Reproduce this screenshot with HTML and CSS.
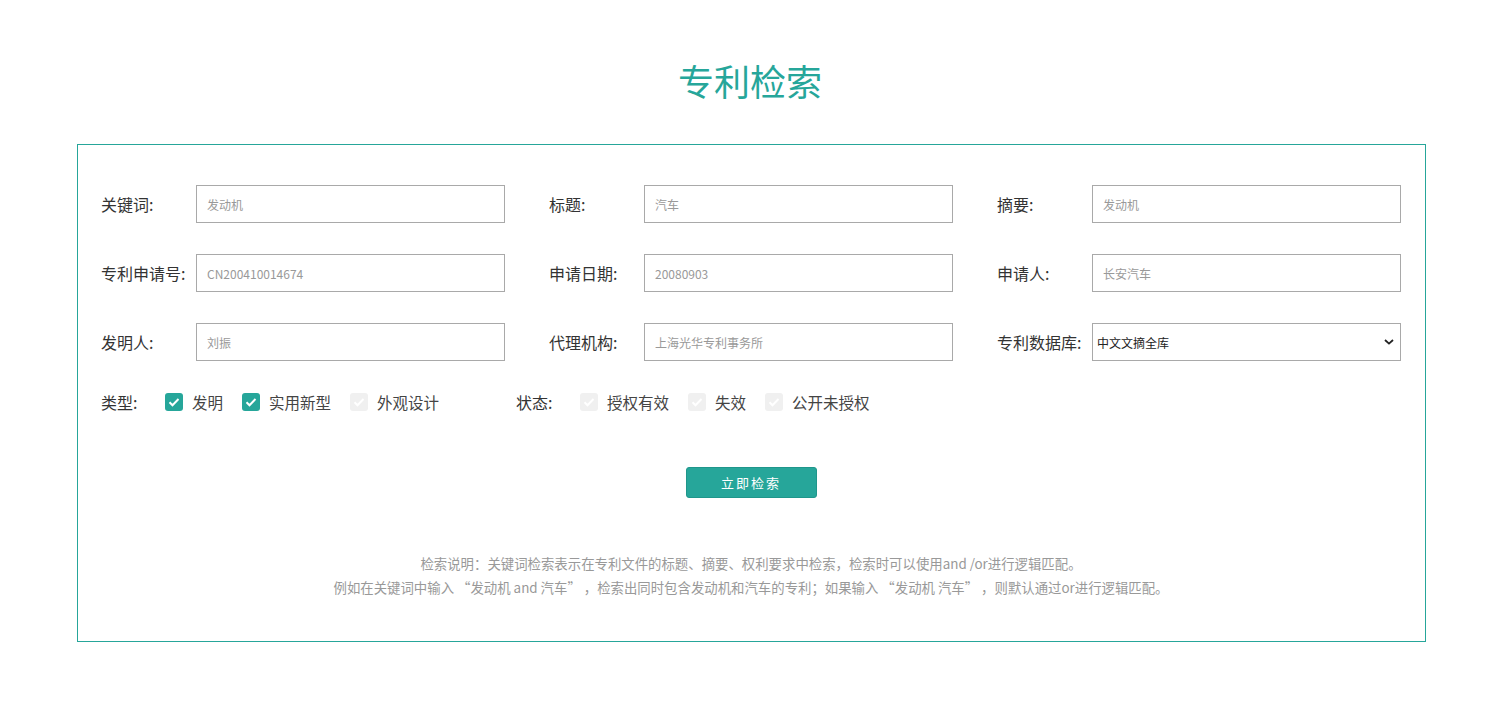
FILE: index.html
```html
<!DOCTYPE html>
<html lang="zh-CN">
<head>
    <meta charset="UTF-8">
    <meta name="viewport" content="width=device-width, initial-scale=1.0">
    <title>专利检索</title>
    <link rel="stylesheet" href="styles.css">
</head>
<body>

<h1 class="page-title">专利检索</h1>

<div class="search-box">
    <div class="form-grid">
        <div class="field">
            <label>关键词:</label>
            <input type="text" placeholder="发动机">
        </div>
        <div class="field">
            <label>标题:</label>
            <input type="text" placeholder="汽车">
        </div>
        <div class="field">
            <label>摘要:</label>
            <input type="text" placeholder="发动机">
        </div>
        <div class="field">
            <label>专利申请号:</label>
            <input type="text" placeholder="CN200410014674">
        </div>
        <div class="field">
            <label>申请日期:</label>
            <input type="text" placeholder="20080903">
        </div>
        <div class="field">
            <label>申请人:</label>
            <input type="text" placeholder="长安汽车">
        </div>
        <div class="field">
            <label>发明人:</label>
            <input type="text" placeholder="刘振">
        </div>
        <div class="field">
            <label>代理机构:</label>
            <input type="text" placeholder="上海光华专利事务所">
        </div>
        <div class="field">
            <label>专利数据库:</label>
            <select>
                <option>中文文摘全库</option>
            </select>
        </div>
    </div>

    <div class="check-row">
        <div class="check-group type-group">
            <span class="group-label">类型:</span>
            <span class="check on"><svg viewBox="0 0 18 18"><path d="M4.5 9.2l3 3 6-6.2" /></svg></span>
            <span class="check-text">发明</span>
            <span class="check on"><svg viewBox="0 0 18 18"><path d="M4.5 9.2l3 3 6-6.2" /></svg></span>
            <span class="check-text">实用新型</span>
            <span class="check"><svg viewBox="0 0 18 18"><path d="M4.5 9.2l3 3 6-6.2" /></svg></span>
            <span class="check-text">外观设计</span>
        </div>
        <div class="check-group">
            <span class="group-label">状态:</span>
            <span class="check"><svg viewBox="0 0 18 18"><path d="M4.5 9.2l3 3 6-6.2" /></svg></span>
            <span class="check-text">授权有效</span>
            <span class="check"><svg viewBox="0 0 18 18"><path d="M4.5 9.2l3 3 6-6.2" /></svg></span>
            <span class="check-text">失效</span>
            <span class="check"><svg viewBox="0 0 18 18"><path d="M4.5 9.2l3 3 6-6.2" /></svg></span>
            <span class="check-text">公开未授权</span>
        </div>
    </div>

    <div class="actions">
        <button class="search-btn">立即检索</button>
    </div>

    <div class="notes">
        <p>检索说明：关键词检索表示在专利文件的标题、摘要、权利要求中检索，检索时可以使用and /or进行逻辑匹配。</p>
        <p>例如在关键词中输入 “发动机 and 汽车” ，检索出同时包含发动机和汽车的专利；如果输入 “发动机 汽车” ，则默认通过or进行逻辑匹配。</p>
    </div>
</div>

</body>
</html>
```

FILE: styles.css
```css
body {
    margin: 0;
    font-family: "Noto Sans CJK SC", "Noto Sans", sans-serif;
    color: #333;
    background: #fff;
}

.page-title {
    margin: 0;
    padding-top: 55px;
    height: 144px;
    box-sizing: border-box;
    text-align: center;
    font-size: 36px;
    font-weight: normal;
    line-height: 50px;
    color: #26a69a;
}

.search-box {
    width: 1349px;
    margin: 0 0 0 77px;
    border: 1px solid #26a69a;
    box-sizing: border-box;
    padding: 40px 24px 42px 23px;
}

.form-grid {
    display: grid;
    grid-template-columns: repeat(3, 404px);
    column-gap: 44px;
    row-gap: 31px;
}

.field {
    display: flex;
    align-items: center;
}

.field label {
    width: 95px;
    flex-shrink: 0;
    font-size: 16px;
    line-height: 38px;
    color: #333;
}

.field input,
.field select {
    width: 310px;
    height: 38px;
    box-sizing: border-box;
    border: 1px solid #a9a9a9;
    border-radius: 0;
    font-family: inherit;
    font-size: 12px;
    outline: none;
}

.field input {
    padding: 0 10px;
}

.field input::placeholder {
    color: #999;
}

.field select {
    appearance: none;
    -webkit-appearance: none;
    padding: 0 4px;
    color: #222;
    background: #fff url("data:image/svg+xml;utf8,<svg xmlns='http://www.w3.org/2000/svg' width='10' height='6' viewBox='0 0 10 6'><path d='M1 1l4 3.6L9 1' fill='none' stroke='%23222' stroke-width='1.8'/></svg>") no-repeat right 6px center;
}

.check-row {
    display: flex;
    margin-top: 29px;
    height: 24px;
    align-items: center;
}

.check-group {
    display: flex;
    align-items: center;
    font-size: 16px;
    line-height: 24px;
}

.type-group {
    width: 415px;
}

.group-label {
    width: 64px;
    color: #333;
}

.check {
    width: 18px;
    height: 18px;
    border-radius: 3px;
    background: #f0f0f0;
    margin-right: 9px;
    display: flex;
    align-items: center;
    justify-content: center;
}

.check svg {
    width: 18px;
    height: 18px;
}

.check path {
    fill: none;
    stroke: #fff;
    stroke-width: 2;
}

.check.on {
    background: #26a69a;
}

.check-text {
    margin-right: 19px;
    font-size: 15.5px;
    color: #444;
}

.actions {
    margin-top: 53px;
    text-align: center;
}

.search-btn {
    width: 131px;
    height: 31px;
    border: 1px solid #1f968b;
    border-radius: 3px;
    background: #26a69a;
    color: #fff;
    font-family: inherit;
    font-size: 13px;
    letter-spacing: 2px;
    cursor: pointer;
}

.notes {
    margin-top: 53px;
    text-align: center;
    font-size: 13.4px;
    line-height: 24px;
    color: #999;
}

.notes p {
    margin: 0;
}
```
